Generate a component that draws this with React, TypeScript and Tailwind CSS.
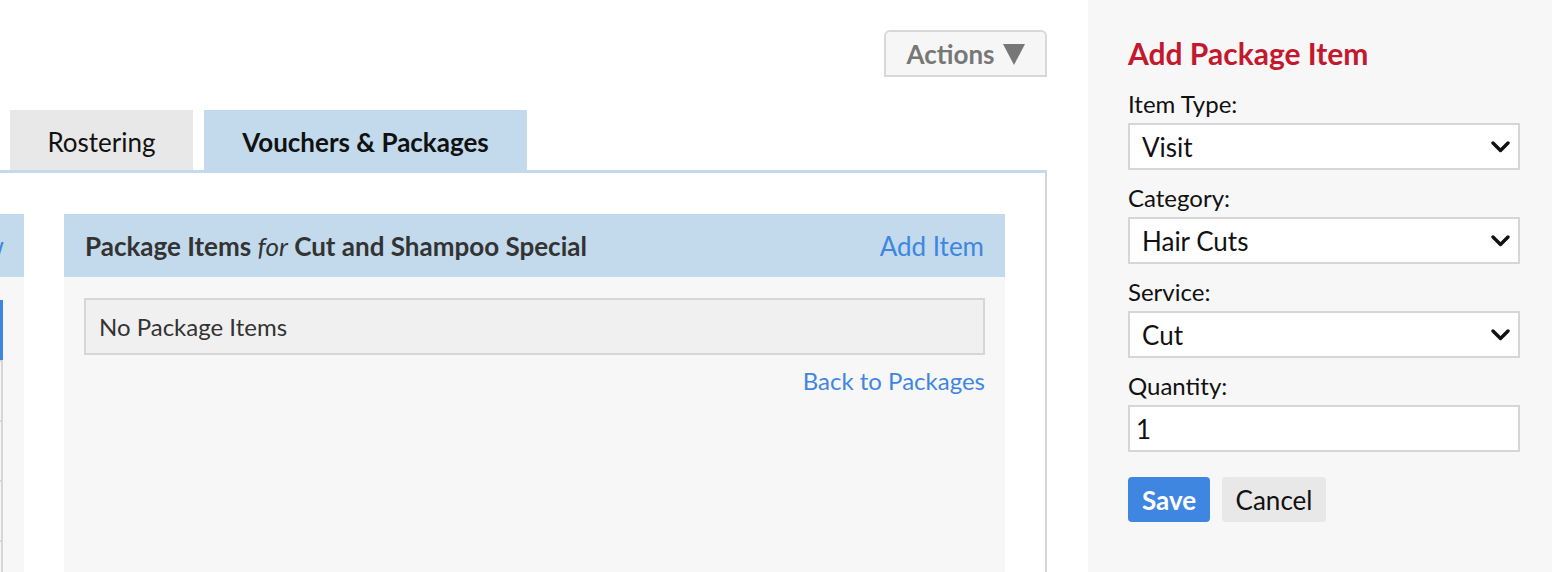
const fields = [
  { label: "Item Type:", value: "Visit", kind: "select" },
  { label: "Category:", value: "Hair Cuts", kind: "select" },
  { label: "Service:", value: "Cut", kind: "select" },
  { label: "Quantity:", value: "1", kind: "input" }
];

const sideRows = [0, 1, 2, 3, 4];

function Chevron() {
  return (
    <svg className="pointer-events-none absolute right-[8px] top-1/2 -translate-y-1/2" width="19" height="13" viewBox="0 0 19 13" aria-hidden>
      <polyline points="2,2.5 9.5,10 17,2.5" fill="none" stroke="#111" strokeWidth="3.4" strokeLinecap="round" strokeLinejoin="round" />
    </svg>
  );
}

export default function App() {
  return (
    <div className="flex h-[572px] w-[1552px] overflow-hidden bg-white font-['Lato',sans-serif]">
      <main className="flex h-full w-[1088px] shrink-0 flex-col pr-[41px] pt-[30px]">
        <div className="flex justify-end">
          <button className="flex h-[47px] w-[163px] items-center justify-center gap-[8px] rounded-t-[6px] border-2 border-[#d8d8d8] bg-[#f6f6f6] text-[26px] font-bold leading-[30px] text-[#777]">
            Actions
            <svg width="22" height="22" viewBox="0 0 22 22" aria-hidden>
              <polygon points="0,1 22,1 11,22" fill="#777" />
            </svg>
          </button>
        </div>

        <div className="mt-[33px] flex gap-[11px] pl-[10px]">
          <div className="flex h-[60px] w-[183px] items-center justify-center bg-[#e8e8e8] pt-[3px] text-[26px] leading-[30px] text-[#111]">
            Rostering
          </div>
          <div className="flex h-[60px] w-[323px] items-center justify-center bg-[#c2daec] pt-[3px] text-[26px] font-bold leading-[30px] text-[#111]">
            Vouchers &amp; Packages
          </div>
        </div>

        <div className="flex flex-1 gap-[40px] border-r-2 border-t-[3px] border-r-[#d6d6d6] border-t-[#c2daec] pr-[40px] pt-[41px]">
          <div className="flex w-[24px] shrink-0 flex-col overflow-hidden">
            <div className="flex h-[63px] items-center justify-end bg-[#c2daec] pr-[20px]">
              <span className="whitespace-nowrap text-[26px] leading-[30px] text-[#3f86e0]">Add New</span>
            </div>
            <div className="flex-1 bg-[#f7f7f7] pr-[21px] pt-[23px]">
              {sideRows.map((row) => (
                <div
                  key={row}
                  className={
                    row === 0
                      ? "h-[60px] border-r-[3px] border-r-[#3f86e0]"
                      : "h-[60px] border-r-2 border-t-2 border-[#d6d6d6]"
                  }
                />
              ))}
            </div>
          </div>

          <div className="flex flex-1 flex-col">
            <div className="flex h-[63px] items-center justify-between bg-[#c2daec] px-[21px]">
              <h2 className="text-[26px] font-bold leading-[30px] text-[#333]">
                Package Items <span className="font-normal italic">for</span> Cut and Shampoo Special
              </h2>
              <a className="text-[26px] leading-[30px] text-[#3f86e0]">Add Item</a>
            </div>
            <div className="flex flex-1 flex-col bg-[#f7f7f7] px-[20px] pt-[21px]">
              <div className="flex h-[57px] items-center border-2 border-[#d6d6d6] bg-[#f0f0f0] px-[13px] text-[24px] leading-[28px] text-[#333]">
                No Package Items
              </div>
              <a className="mt-[12px] self-end text-[24px] leading-[28px] text-[#3f86e0]">Back to Packages</a>
            </div>
          </div>
        </div>
      </main>

      <aside className="h-full flex-1 bg-[#f7f7f7] pl-[40px] pr-[32px] pt-[35px]">
        <h1 className="text-[30px] font-bold leading-[36px] text-[#c3192e]">Add Package Item</h1>
        <div className="mt-[20px] flex flex-col gap-[15px]">
          {fields.map((f) => (
            <div key={f.label} className="flex flex-col gap-[6px]">
              <label className="text-[24px] leading-[26px] text-[#111]">{f.label}</label>
              <div className="relative flex h-[47px] items-center border-2 border-[#d6d6d6] bg-white text-[26px] leading-[30px] text-[#111]">
                <span className={f.kind === "select" ? "pl-[12px]" : "pl-[6px]"}>{f.value}</span>
                {f.kind === "select" && <Chevron />}
              </div>
            </div>
          ))}
        </div>
        <div className="mt-[25px] flex gap-[12px]">
          <button className="h-[45px] w-[82px] rounded-[4px] bg-[#3f86e0] text-[26px] font-bold leading-[30px] text-white">Save</button>
          <button className="h-[45px] w-[104px] rounded-[4px] bg-[#e8e8e8] text-[26px] leading-[30px] text-[#111]">Cancel</button>
        </div>
      </aside>
    </div>
  );
}
